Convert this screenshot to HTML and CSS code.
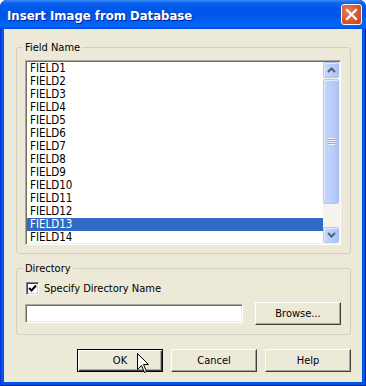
FILE: index.html
```html
<!DOCTYPE html>
<html>
  <head>
    <title>Insert Image from Database</title>
    <meta name="viewport" content="width=device-width, initial-scale=1.0" />
    <link rel="stylesheet" href="styles.css">
  </head>
  <body>
    <div class="window">
      <div class="titlebar">
        <span class="title">Insert Image from Database</span>
        <button class="close" aria-label="Close">
          <svg width="13" height="13" viewBox="0 0 13 13">
            <path d="M2 2 L11 11 M11 2 L2 11" stroke="#fff" stroke-width="2.2" stroke-linecap="square" />
          </svg>
        </button>
      </div>
      <div class="client">
        <fieldset class="group">
          <legend>Field Name</legend>
          <div class="listbox">
            <ul class="items">
              <li>FIELD1</li>
              <li>FIELD2</li>
              <li>FIELD3</li>
              <li>FIELD4</li>
              <li>FIELD5</li>
              <li>FIELD6</li>
              <li>FIELD7</li>
              <li>FIELD8</li>
              <li>FIELD9</li>
              <li>FIELD10</li>
              <li>FIELD11</li>
              <li>FIELD12</li>
              <li class="selected">FIELD13</li>
              <li>FIELD14</li>
            </ul>
            <div class="scrollbar">
              <div class="sb-btn">
                <svg width="9" height="6" viewBox="0 0 9 6">
                  <path d="M1 5 L4.5 1.5 L8 5" fill="none" stroke="#4d6185" stroke-width="2" />
                </svg>
              </div>
              <div class="sb-track">
                <div class="sb-thumb">
                  <span class="grip"></span>
                </div>
              </div>
              <div class="sb-btn">
                <svg width="9" height="6" viewBox="0 0 9 6">
                  <path d="M1 1 L4.5 4.5 L8 1" fill="none" stroke="#4d6185" stroke-width="2" />
                </svg>
              </div>
            </div>
          </div>
        </fieldset>

        <fieldset class="group group-dir">
          <legend>Directory</legend>
          <label class="check">
            <span class="box">
              <svg width="9" height="9" viewBox="0 0 9 9">
                <path d="M1 4 L3.5 6.5 L8 1.5" fill="none" stroke="#000" stroke-width="2" />
              </svg>
            </span>
            Specify Directory Name
          </label>
          <div class="path-row">
            <input class="path" type="text" />
            <button class="btn">Browse...</button>
          </div>
        </fieldset>

        <div class="actions">
          <button class="btn btn-default">OK</button>
          <button class="btn">Cancel</button>
          <button class="btn">Help</button>
          <svg class="cursor" width="13" height="21" viewBox="0 0 13 21">
            <path d="M0.5 0.5 L0.5 16.5 L4.5 12.5 L7.5 19.5 L9.5 18.5 L6.5 11.5 L11.5 11.5 Z" fill="#fff" stroke="#000" stroke-width="1" />
          </svg>
        </div>
      </div>
    </div>
  </body>
</html>
```

FILE: styles.css
```css
body {
  margin: 0;
  background: #fff;
  font-family: "DejaVu Sans Condensed", "Liberation Sans", Arial, sans-serif;
  font-size: 11px;
}
.window {
  width: 366px;
  height: 386px;
  display: flex;
  flex-direction: column;
  background: #0055e5;
  border-radius: 7px 7px 0 0;
  box-shadow: inset 1px 0 #0831d9, inset -1px 0 #001ea0, inset 0 -1px #001ea0;
  overflow: hidden;
}
.titlebar {
  height: 29px;
  display: flex;
  align-items: center;
  justify-content: space-between;
  padding: 0 4px 0 7px;
  background: linear-gradient(to bottom, #3c8cf7 0, #0a62ee 3px, #0058ee 8px, #0054e3 45%, #0064f8 85%, #0061f1 93%, #0048d8 100%);
  border-radius: 7px 7px 0 0;
}
.title {
  color: #fff;
  font-weight: bold;
  font-size: 13px;
  text-shadow: 1px 1px #0a1e8c;
  margin-top: 1px;
}
.close {
  width: 21px;
  height: 21px;
  padding: 0;
  border: 1px solid #fff;
  border-radius: 3px;
  background: radial-gradient(circle at 35% 35%, #e8805f, #d9552d 55%, #c4421d);
  display: flex;
  align-items: center;
  justify-content: center;
}
.client {
  flex: 1;
  margin: 0 4px 4px 4px;
  background: #ece9d8;
  padding: 12px 11px 0 12px;
  display: flex;
  flex-direction: column;
}
.group {
  margin: 0;
  padding: 6px 9px 8px 8px;
  border: 1px solid #d0d0bf;
  border-radius: 3px;
  min-width: 0;
}
.group legend {
  padding: 0 2px;
  margin-left: -2px;
  line-height: 13px;
  color: #000;
}
.group-dir {
  margin-top: 8px;
  padding: 7px 9px 9px 8px;
}
.listbox {
  height: 185px;
  box-sizing: border-box;
  display: flex;
  border: 1px solid;
  border-color: #aca899 #fff #fff #aca899;
  box-shadow: inset 1px 1px #716f64, inset -1px -1px #f1efe2;
  background: #fff;
  padding: 1px;
  overflow: hidden;
}
.items {
  flex: 1;
  margin: 0;
  padding: 0;
  list-style: none;
  font-size: 11.5px;
}
.items li {
  height: 13px;
  line-height: 13px;
  padding-left: 3px;
  color: #000;
}
.items li.selected {
  background: #316ac5;
  color: #fff;
}
.scrollbar {
  width: 16px;
  display: flex;
  flex-direction: column;
  background: #f4f3ee;
}
.sb-btn,
.sb-thumb {
  border: 1px solid #b3c5f2;
  border-radius: 2px;
  background: linear-gradient(to right, #c6d5fc, #b9cdfb 60%, #adc2f5);
  box-shadow: inset 1px 1px #e1eafe;
}
.sb-btn {
  height: 14px;
  display: flex;
  align-items: center;
  justify-content: center;
}
.sb-track {
  flex: 1;
  padding-top: 1px;
}
.sb-thumb {
  height: 123px;
  display: flex;
  align-items: center;
  justify-content: center;
}
.grip {
  width: 7px;
  height: 7px;
  background: repeating-linear-gradient(to bottom, #eef2fd 0, #eef2fd 1px, #8ca6e6 1px, #8ca6e6 2px);
}
.check {
  display: flex;
  align-items: center;
  gap: 5px;
  height: 13px;
  margin-left: 1px;
  color: #000;
}
.box {
  width: 11px;
  height: 11px;
  border: 1px solid;
  border-color: #808080 #fff #fff #808080;
  box-shadow: inset 1px 1px #404040, inset -1px -1px #d4d0c8;
  background: #fff;
  display: flex;
  align-items: center;
  justify-content: center;
}
.path-row {
  display: flex;
  align-items: center;
  justify-content: space-between;
  margin-top: 7px;
}
.path {
  width: 218px;
  height: 19px;
  box-sizing: border-box;
  border: 1px solid;
  border-color: #aca899 #fff #fff #aca899;
  box-shadow: inset 1px 1px #716f64, inset -1px -1px #f1efe2;
  background: #fff;
  margin: 0;
}
.btn {
  width: 86px;
  height: 23px;
  padding: 0;
  font-family: "DejaVu Sans Condensed", "Liberation Sans", Arial, sans-serif;
  font-size: 11px;
  color: #000;
  background: #ece9d8;
  border: 1px solid;
  border-color: #fff #404040 #404040 #fff;
  box-shadow: inset -1px -1px #aca899;
}
.btn-default {
  border-color: #000;
  box-shadow: inset 1px 1px #fff, inset -1px -1px #404040, inset -2px -2px #aca899;
}
.actions {
  position: relative;
  display: flex;
  justify-content: flex-end;
  gap: 8px;
  margin-top: 14px;
}
.cursor {
  position: absolute;
  left: 121px;
  top: 4px;
}
```
